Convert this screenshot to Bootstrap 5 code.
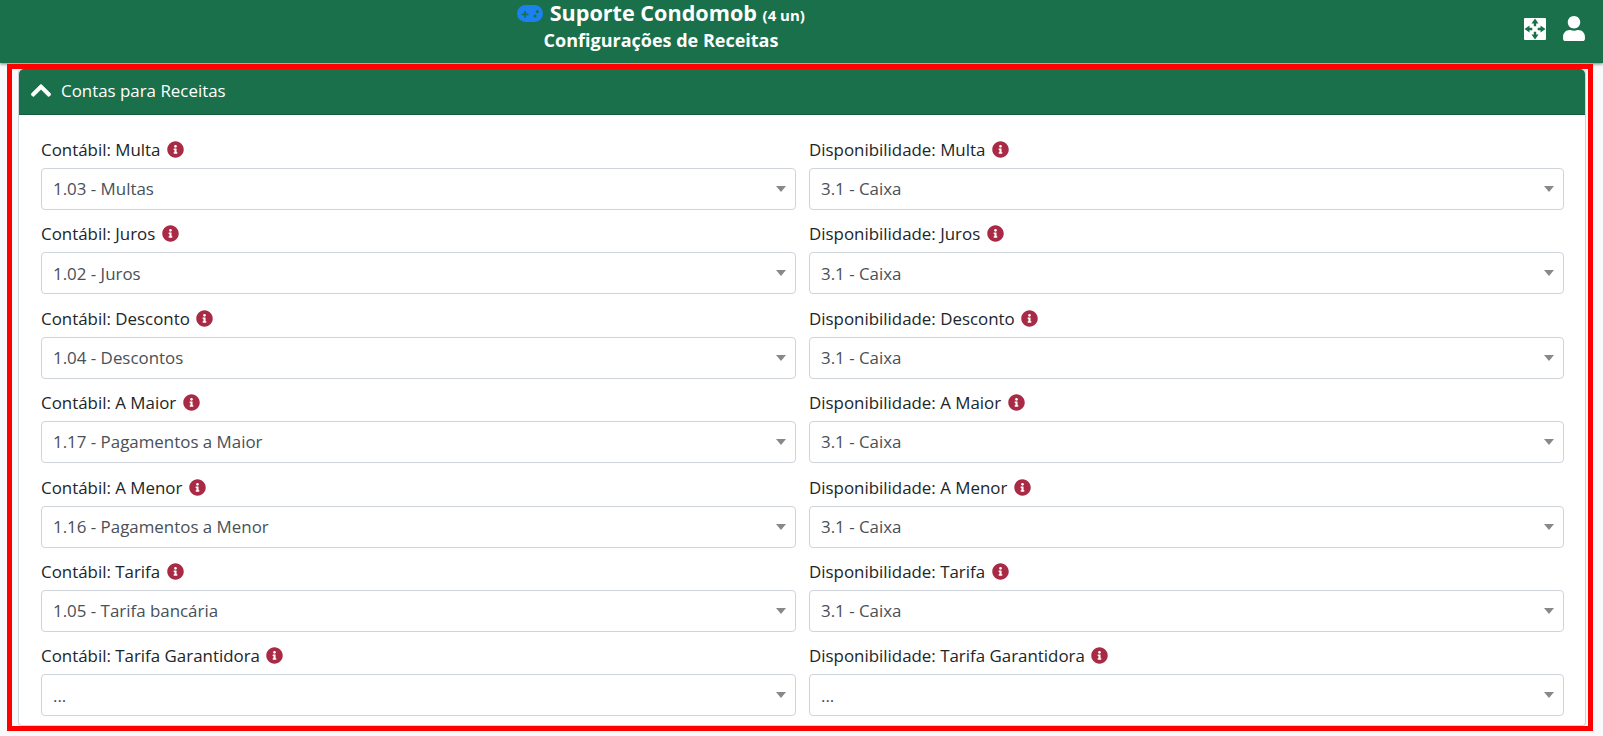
<!DOCTYPE html>
<html lang="pt-BR">
<head>
  <meta charset="UTF-8" />
  <meta name="viewport" content="width=device-width, initial-scale=1.0" />
  <title>Configurações de Receitas</title>
  <link href="https://cdn.jsdelivr.net/npm/bootstrap@5.3.0/dist/css/bootstrap.min.css" rel="stylesheet" />
  <style>
    html, body { height: 100%; overflow: hidden; }
    body {
      font-family: "Open Sans", "Liberation Sans", sans-serif;
      font-size: 16.9px;
      background: #f8f9fa;
      color: #212529;
    }

    /* Top bar */
    .top-bar {
      height: 63px;
      background: #19704a;
      box-shadow: 0 1px 3px rgba(0, 0, 0, .5);
      color: #fff;
    }
    .top-title { width: 1322px; padding-top: 1px; }
    .top-name { font-size: 21.6px; font-weight: 700; line-height: 24px; }
    .top-name small { font-size: 15px; font-weight: 700; }
    .top-sub { font-size: 18px; font-weight: 700; line-height: 24px; margin-top: 1px; }
    .game-icon { width: 26px; height: 17px; fill: #1b80f0; vertical-align: -1px; margin-right: 1px; }
    .top-actions { gap: 17px; padding-right: 18px; }
    .top-actions svg { fill: #fff; display: block; }

    /* Red highlight around the card */
    .highlight {
      margin: 1px 10px 0 7px;
      border: 5px solid #f00;
      padding: 0 2px 0 6px;
    }

    /* Card */
    .receitas-card { border-radius: 4px; border-color: #ced4da; border-top: 0; }
    .receitas-head {
      height: 46px;
      background: #19704a;
      color: #fff;
      border-radius: 0;
      padding: 0 12px 2px;
      gap: 10px;
    }
    .receitas-head svg { width: 20px; height: 23px; fill: #fff; stroke: #fff; stroke-width: 18; }
    .receitas-body { padding: 23px 21px 9px 22px; }
    .receitas-body .row { --bs-gutter-x: 13px; --bs-gutter-y: 12.4px; }

    .field-label { display: block; line-height: 24px; margin-bottom: 6px; }
    .info-icon { width: 17px; height: 17px; fill: #a82a45; margin-left: 2px; vertical-align: -2px; }
    .field .form-select {
      height: 42px;
      padding: 0 30px 0 11px;
      font-size: 16.9px;
      color: #495057;
      border-color: #ced4da;
      border-radius: 4px;
      background-image: url("data:image/svg+xml,%3csvg xmlns='http://www.w3.org/2000/svg' viewBox='0 0 10 6'%3e%3cpath fill='%23888' d='M0 0h10L5 6z'/%3e%3c/svg%3e");
      background-size: 10px 6px;
      background-position: right 9px center;
    }
  </style>
</head>
<body>
  <svg class="d-none">
    <symbol id="ico-info" viewBox="0 0 512 512"><path d="M256 8C119.043 8 8 119.083 8 256c0 136.997 111.043 248 248 248s248-111.003 248-248C504 119.083 392.957 8 256 8zm0 110c23.196 0 42 18.804 42 42s-18.804 42-42 42-42-18.804-42-42 18.804-42 42-42zm56 254c0 6.627-5.373 12-12 12h-88c-6.627 0-12-5.373-12-12v-24c0-6.627 5.373-12 12-12h12v-64h-12c-6.627 0-12-5.373-12-12v-24c0-6.627 5.373-12 12-12h64c6.627 0 12 5.373 12 12v100h12c6.627 0 12 5.373 12 12v24z"/></symbol>
  </svg>

  <!-- Top bar -->
  <nav class="top-bar d-flex align-items-start">
    <div class="top-title text-center">
      <div class="top-name">
        <svg class="game-icon" viewBox="0 0 26 17"><path fill-rule="evenodd" d="M8.5 0h9a8.5 8.5 0 0 1 0 17h-9a8.5 8.5 0 0 1 0-17zM7.200 6v2.500H4.700v1.700h2.500v2.500h1.700v-2.500h2.500V8.500H8.900V6zM20.300 5a1.600 1.600 0 1 0 0 3.200 1.600 1.600 0 0 0 0-3.200zM18 9.400a1.600 1.600 0 1 0 0 3.200 1.600 1.600 0 0 0 0-3.200z"/></svg>
        Suporte Condomob <small>(4 un)</small>
      </div>
      <div class="top-sub">Configurações de Receitas</div>
    </div>
    <div class="top-actions d-flex align-items-center ms-auto mt-3">
      <svg width="22" height="22" viewBox="0 0 22 22"><path fill-rule="evenodd" d="M1 0h20a1 1 0 0 1 1 1v20a1 1 0 0 1-1 1H1a1 1 0 0 1-1-1V1a1 1 0 0 1 1-1zM11 0.500L7.500 5.500h2.300v2.800h2.400V5.500h2.300zM11 21.500l3.500-5h-2.300v-2.800H9.800v2.800H7.500zM0.500 11l5 3.500v-2.300h2.800V9.800H5.500V7.500zM21.500 11l-5-3.500v2.300h-2.800v2.400h2.800v2.300z"/></svg>
      <svg width="22" height="25" viewBox="0 0 448 512"><path d="M224 256c70.7 0 128-57.3 128-128S294.7 0 224 0 96 57.3 96 128s57.3 128 128 128zm89.6 32h-16.7c-22.2 10.2-46.9 16-72.9 16s-50.6-5.8-72.9-16h-16.7C60.2 288 0 348.2 0 422.4V464c0 26.5 21.5 48 48 48h352c26.5 0 48-21.5 48-48v-41.6c0-74.2-60.2-134.4-134.4-134.4z"/></svg>
    </div>
  </nav>

  <div class="highlight">
    <div class="card receitas-card">
      <div class="card-header receitas-head d-flex align-items-center">
        <svg viewBox="0 0 448 512"><path d="M240.971 130.524l194.343 194.343c9.373 9.373 9.373 24.569 0 33.941l-22.667 22.667c-9.357 9.357-24.522 9.375-33.901.04L224 227.495 69.255 381.516c-9.379 9.335-24.544 9.317-33.901-.04l-22.667-22.667c-9.373-9.373-9.373-24.569 0-33.941L207.03 130.525c9.372-9.373 24.568-9.373 33.941-.001z"/></svg>
        <span>Contas para Receitas</span>
      </div>
      <div class="card-body receitas-body">
        <div class="row">
          <div class="col-6 field">
            <label class="field-label">Contábil: Multa <svg class="info-icon"><use href="#ico-info"/></svg></label>
            <select class="form-select"><option>1.03 - Multas</option></select>
          </div>
          <div class="col-6 field">
            <label class="field-label">Disponibilidade: Multa <svg class="info-icon"><use href="#ico-info"/></svg></label>
            <select class="form-select"><option>3.1 - Caixa</option></select>
          </div>
          <div class="col-6 field">
            <label class="field-label">Contábil: Juros <svg class="info-icon"><use href="#ico-info"/></svg></label>
            <select class="form-select"><option>1.02 - Juros</option></select>
          </div>
          <div class="col-6 field">
            <label class="field-label">Disponibilidade: Juros <svg class="info-icon"><use href="#ico-info"/></svg></label>
            <select class="form-select"><option>3.1 - Caixa</option></select>
          </div>
          <div class="col-6 field">
            <label class="field-label">Contábil: Desconto <svg class="info-icon"><use href="#ico-info"/></svg></label>
            <select class="form-select"><option>1.04 - Descontos</option></select>
          </div>
          <div class="col-6 field">
            <label class="field-label">Disponibilidade: Desconto <svg class="info-icon"><use href="#ico-info"/></svg></label>
            <select class="form-select"><option>3.1 - Caixa</option></select>
          </div>
          <div class="col-6 field">
            <label class="field-label">Contábil: A Maior <svg class="info-icon"><use href="#ico-info"/></svg></label>
            <select class="form-select"><option>1.17 - Pagamentos a Maior</option></select>
          </div>
          <div class="col-6 field">
            <label class="field-label">Disponibilidade: A Maior <svg class="info-icon"><use href="#ico-info"/></svg></label>
            <select class="form-select"><option>3.1 - Caixa</option></select>
          </div>
          <div class="col-6 field">
            <label class="field-label">Contábil: A Menor <svg class="info-icon"><use href="#ico-info"/></svg></label>
            <select class="form-select"><option>1.16 - Pagamentos a Menor</option></select>
          </div>
          <div class="col-6 field">
            <label class="field-label">Disponibilidade: A Menor <svg class="info-icon"><use href="#ico-info"/></svg></label>
            <select class="form-select"><option>3.1 - Caixa</option></select>
          </div>
          <div class="col-6 field">
            <label class="field-label">Contábil: Tarifa <svg class="info-icon"><use href="#ico-info"/></svg></label>
            <select class="form-select"><option>1.05 - Tarifa bancária</option></select>
          </div>
          <div class="col-6 field">
            <label class="field-label">Disponibilidade: Tarifa <svg class="info-icon"><use href="#ico-info"/></svg></label>
            <select class="form-select"><option>3.1 - Caixa</option></select>
          </div>
          <div class="col-6 field">
            <label class="field-label">Contábil: Tarifa Garantidora <svg class="info-icon"><use href="#ico-info"/></svg></label>
            <select class="form-select"><option>...</option></select>
          </div>
          <div class="col-6 field">
            <label class="field-label">Disponibilidade: Tarifa Garantidora <svg class="info-icon"><use href="#ico-info"/></svg></label>
            <select class="form-select"><option>...</option></select>
          </div>
        </div>
      </div>
    </div>
  </div>

  <script src="https://cdn.jsdelivr.net/npm/bootstrap@5.3.0/dist/js/bootstrap.bundle.min.js"></script>
</body>
</html>
